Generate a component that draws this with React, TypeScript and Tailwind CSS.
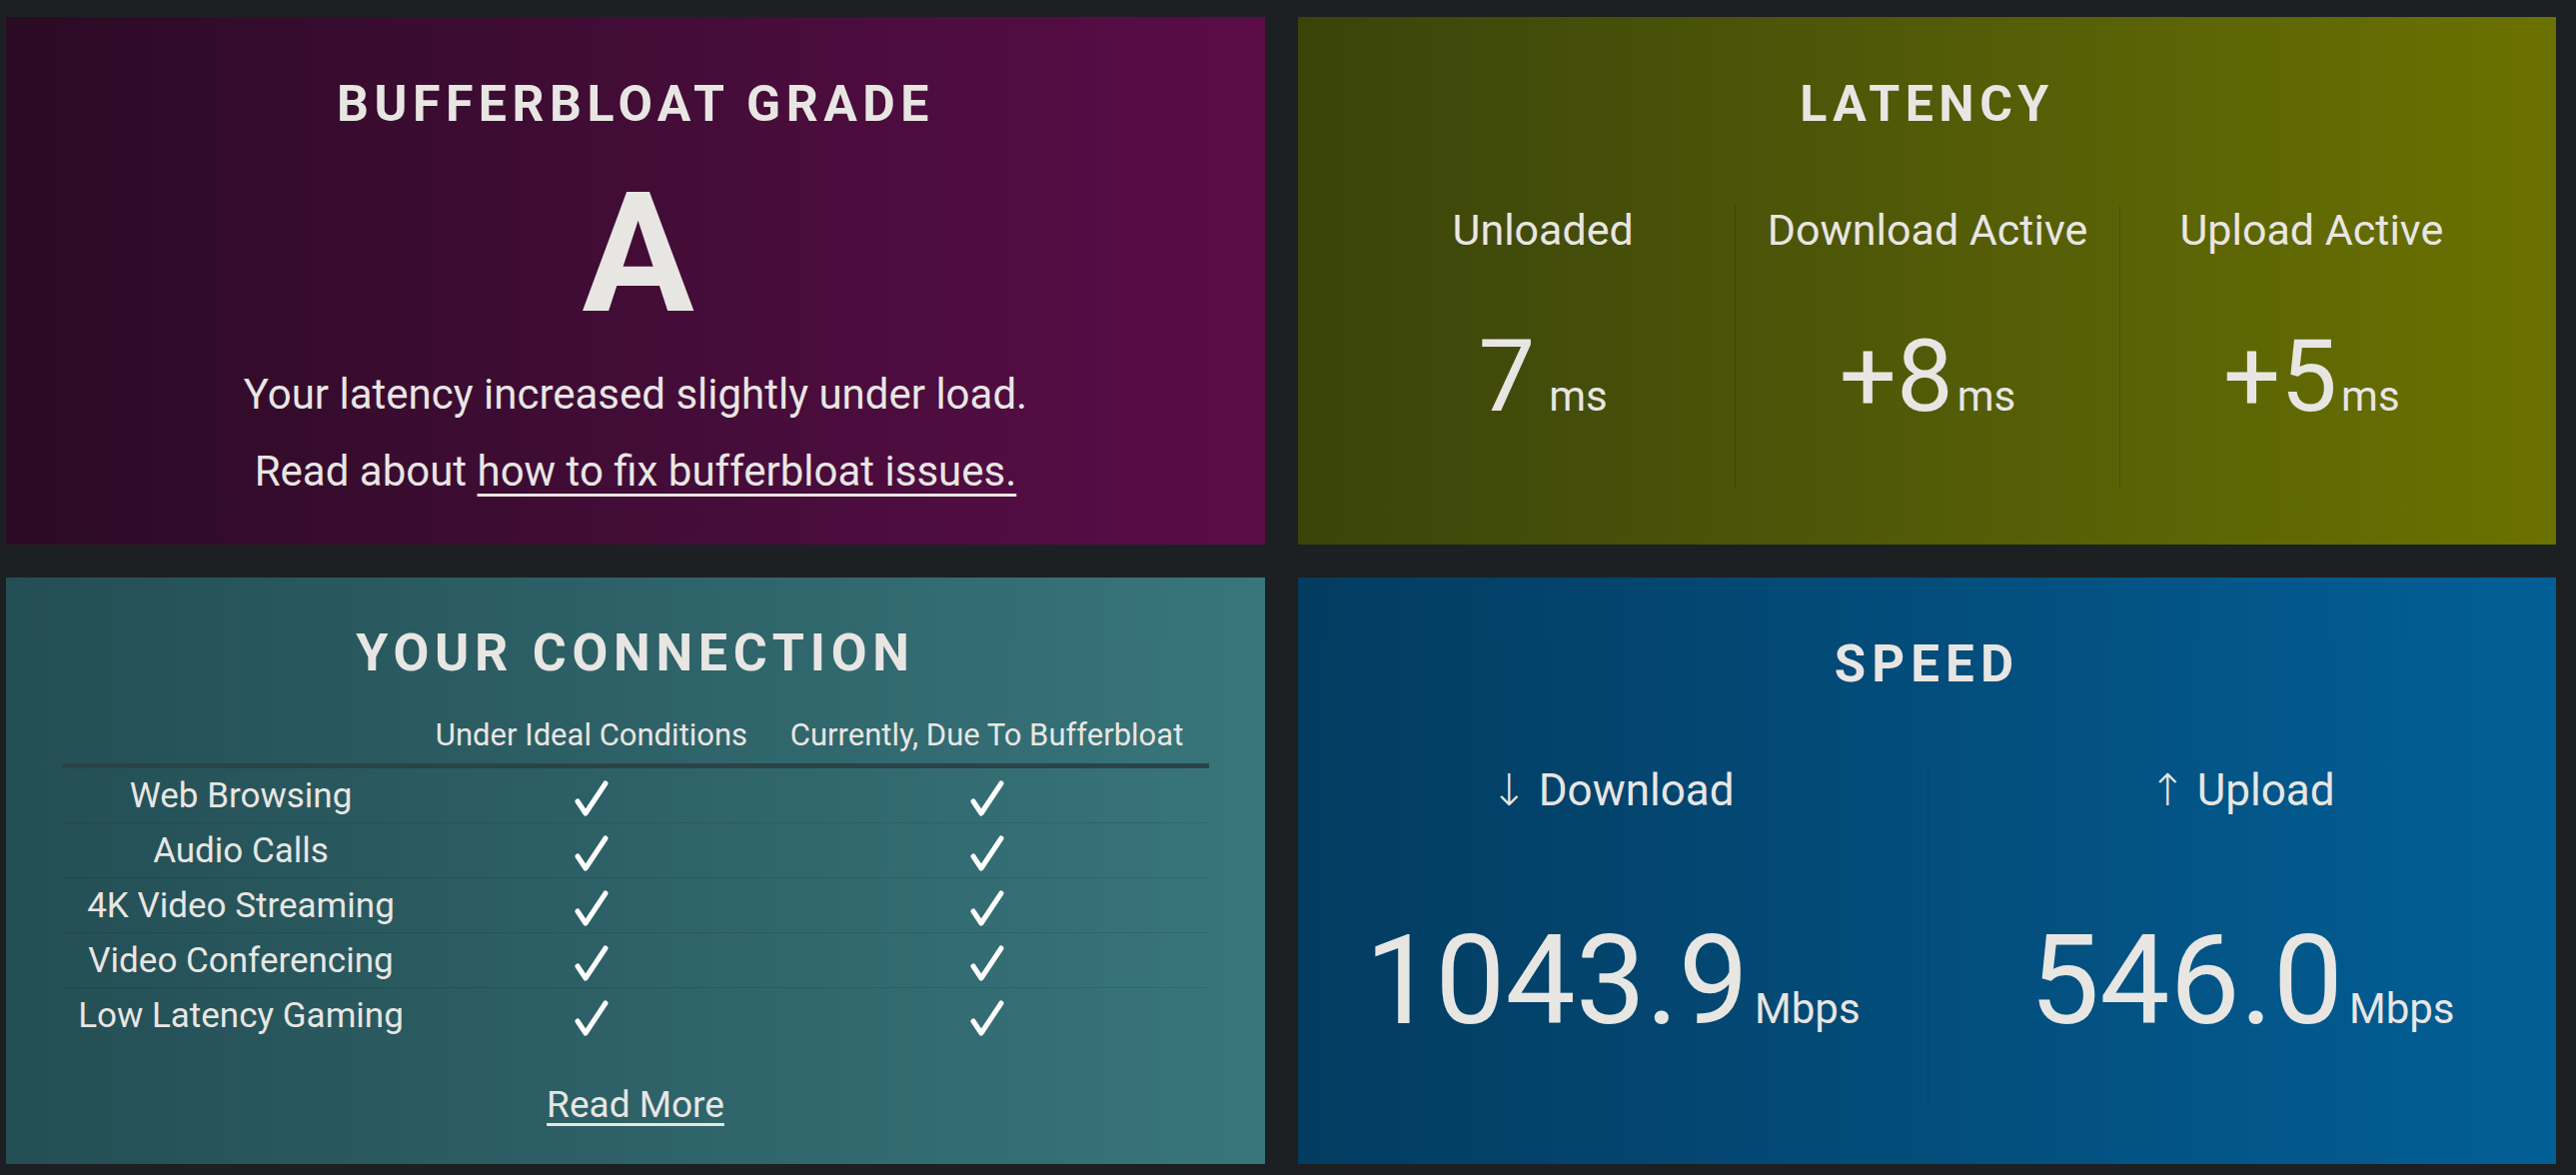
import React from "react";

function Check() {
  return (
    <svg width="38" height="36" viewBox="0 0 38 36" className="block">
      <path d="M5 21 L13 33 L33 3" fill="none" stroke="#ffffff" strokeWidth="5" strokeLinecap="round" strokeLinejoin="round" />
    </svg>
  );
}

const rows = ["Web Browsing", "Audio Calls", "4K Video Streaming", "Video Conferencing", "Low Latency Gaming"];

export default function App() {
  return (
    <div className="min-h-screen w-full bg-[#1d2022] pl-[6px] pt-[17px] font-['Roboto','Open_Sans',sans-serif] text-[#e8e6e3]">
      <div className="grid grid-cols-[1260px_1259px] grid-rows-[528px_587px] gap-[33px]">
        {/* Bufferbloat grade */}
        <div className="flex flex-col items-center bg-linear-to-r from-[#2b0a25] to-[#5b0c49] pt-[62px]">
          <div className="text-[50px] font-bold leading-none tracking-[0.11em]">BUFFERBLOAT GRADE</div>
          <div className="mt-[42px] text-[167px] font-bold leading-none tracking-[-0.03em]">A</div>
          <div className="mt-[36px] text-[42px] leading-none">Your latency increased slightly under load.</div>
          <div className="mt-[35px] text-[42px] leading-none">
            Read about <span className="underline decoration-[3px] underline-offset-[8px]">how to fix bufferbloat issues.</span>
          </div>
        </div>

        {/* Latency */}
        <div className="flex flex-col items-center bg-linear-to-r from-[#3a440a] to-[#6b7200] px-[53px] pt-[62px]">
          <div className="text-[50px] font-bold leading-none tracking-[0.11em]">LATENCY</div>
          <div className="mt-[76px] grid h-[284px] w-full grid-cols-3">
            {[
              ["Unloaded", "7", "ml-[14px]"],
              ["Download Active", "+8", "ml-[4px]"],
              ["Upload Active", "+5", "ml-[4px]"],
            ].map(([label, val, ms], i) => (
              <div key={label} className={`flex flex-col items-center pt-[4px] ${i > 0 ? "border-l border-black/15" : ""}`}>
                <div className="text-[43px] leading-none">{label}</div>
                <div className="mt-[74px] flex items-baseline leading-none">
                  <span className="text-[101px] leading-none">{val}</span>
                  <span className={`text-[42px] leading-none ${ms}`}>ms</span>
                </div>
              </div>
            ))}
          </div>
        </div>

        {/* Your connection */}
        <div className="flex flex-col items-center bg-linear-to-r from-[#234e54] to-[#38767c] px-[56px] pt-[50px]">
          <div className="text-[52px] font-bold leading-none tracking-[0.11em]">YOUR CONNECTION</div>
          <div className="mt-[40px] w-full">
            <div className="grid grid-cols-[358px_344px_447px] border-b-[5px] border-[#2b4347] pb-[13px] text-[31px] leading-none">
              <div />
              <div className="text-center">Under Ideal Conditions</div>
              <div className="text-center">Currently, Due To Bufferbloat</div>
            </div>
            {rows.map((r, i) => (
              <div
                key={r}
                className={`grid h-[55px] grid-cols-[358px_344px_447px] items-center text-[35px] leading-none ${i < rows.length - 1 ? "border-b border-black/10" : ""}`}
              >
                <div className="text-center">{r}</div>
                <div className="flex justify-center pt-[5px]"><Check /></div>
                <div className="flex justify-center pt-[5px]"><Check /></div>
              </div>
            ))}
          </div>
          <a className="mt-[43px] text-[37px] leading-none underline decoration-[3px] underline-offset-[6px]">Read More</a>
        </div>

        {/* Speed */}
        <div className="flex flex-col items-center bg-linear-to-r from-[#033c61] to-[#025f96] pt-[61px]">
          <div className="text-[51px] font-bold leading-none tracking-[0.12em]">SPEED</div>
          <div className="mt-[74px] grid h-[346px] w-full grid-cols-2">
            {[
              ["↓", "Download", "1043.9"],
              ["↑", "Upload", "546.0"],
            ].map(([arrow, label, val], i) => (
              <div key={label} className={`flex flex-col items-center pt-[5px] ${i > 0 ? "border-l border-black/10" : ""}`}>
                <div className="text-[44px] leading-none">
                  <span className="font-['DejaVu_Sans',sans-serif] font-light">{arrow}</span> {label}
                </div>
                <div className="mt-[106px] flex items-baseline leading-none">
                  <span className="text-[125px] leading-none">{val}</span>
                  <span className="ml-[6px] text-[42px] leading-none">Mbps</span>
                </div>
              </div>
            ))}
          </div>
        </div>
      </div>
    </div>
  );
}
